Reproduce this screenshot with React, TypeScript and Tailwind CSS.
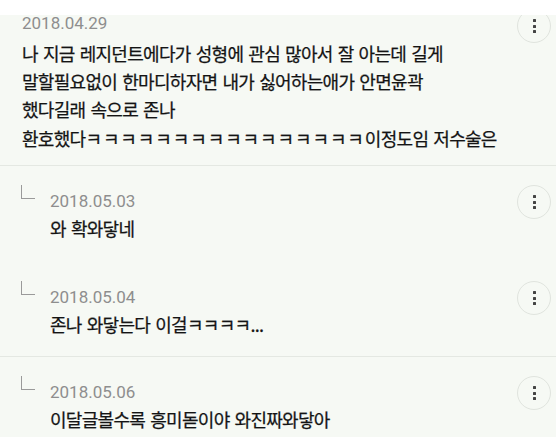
const hangul = '"Noto Sans CJK KR", "Noto Sans", sans-serif';

const replies = [
  { date: '2018.05.03', text: '와 확와닿네', divider: false, h: 'h-[96px]' },
  { date: '2018.05.04', text: '존나 와닿는다 이걸ㅋㅋㅋㅋ...', divider: true, h: 'h-[95px]' },
  { date: '2018.05.06', text: '이달글볼수록 흥미돋이야 와진짜와닿아', divider: false, h: 'h-[95px]' },
];

function MoreButton({ className }: { className: string }) {
  return (
    <button
      className={`absolute right-[5px] w-[34px] h-[34px] rounded-full border border-[#e0e4de] flex flex-col items-center justify-center gap-[2.5px] ${className}`}
      aria-label="More"
    >
      <span className="w-[3px] h-[3px] rounded-[0.5px] bg-[#444]" />
      <span className="w-[3px] h-[3px] rounded-[0.5px] bg-[#444]" />
      <span className="w-[3px] h-[3px] rounded-[0.5px] bg-[#444]" />
    </button>
  );
}

const body =
  'text-[18px] text-[#141414] tracking-[-0.7px] [word-spacing:1.7px] whitespace-nowrap [-webkit-text-stroke:0.25px_#141414]';

export default function App() {
  return (
    <div className="w-[556px] h-[437px] overflow-hidden bg-[#f6f9f4] relative">
      <div className="h-[15px] bg-white relative z-10" />

      <div className="relative h-[151px] border-b border-[#e4e8e2] pl-[22px] pr-[50px]">
        <div className="text-[17px] leading-[16px] text-[#8e8e8e] font-['Roboto',sans-serif]">2018.04.29</div>
        <div className={`mt-[8px] leading-[28.2px] ${body}`} style={{ fontFamily: hangul }}>
          <div>나 지금 레지던트에다가 성형에 관심 많아서 잘 아는데 길게</div>
          <div>말할필요없이 한마디하자면 내가 싫어하는애가 안면윤곽</div>
          <div>했다길래 속으로 존나</div>
          <div>
            환호했다<span className="tracking-[0.9px]">ㅋㅋㅋㅋㅋㅋㅋㅋㅋㅋㅋㅋㅋㅋㅋㅋ</span>이정도임 저수술은
          </div>
        </div>
        <MoreButton className="top-[-6px]" />
      </div>

      {replies.map((r) => (
        <div
          key={r.date}
          className={`relative ${r.h} flex items-start pl-[21px] ${r.divider ? 'border-b border-[#e4e8e2]' : ''}`}
        >
          <div className="mt-[19px] w-[14px] h-[14px] border-l-[1.5px] border-b-[1.5px] border-[#9a9a9a]" />
          <div className="ml-[15px]">
            <div className="mt-[27px] text-[17px] leading-[16px] text-[#8e8e8e] font-['Roboto',sans-serif]">{r.date}</div>
            <div className={`mt-[5px] leading-[28px] ${body}`} style={{ fontFamily: hangul }}>
              {r.text}
            </div>
          </div>
          <MoreButton className="top-[19px]" />
        </div>
      ))}
    </div>
  );
}
